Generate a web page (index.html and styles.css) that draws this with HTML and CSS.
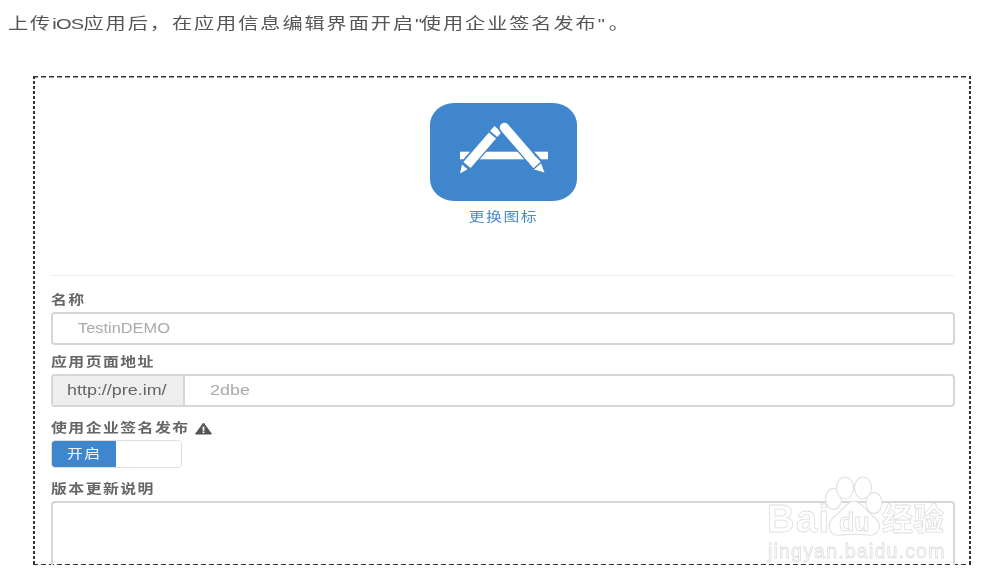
FILE: index.html
```html
<!DOCTYPE html>
<html lang="zh">
<head>
<meta charset="utf-8">
<title>使用企业签名发布</title>
<link rel="stylesheet" href="styles.css">
</head>
<body>
<div class="page">
  <p class="intro"><span class="intro-text">上传<span class="latin">iOS</span>应用后，在应用信息编辑界面开启<span class="quote">"</span>使用企业签名发布<span class="quote-end">"</span>。</span></p>
  <div class="frame">
    <div class="avatar">
      <svg class="app-icon" width="147" height="98" viewBox="0 0 147 98" aria-hidden="true">
        <rect width="147" height="98" rx="24" ry="22" fill="#3f86cd"/>
        <rect x="30" y="48.7" width="88" height="7.6" fill="#fff"/>
        <g fill="none">
          <path d="M31 68.5 L67 27" stroke="#3f86cd" stroke-width="12.5"/>
          <path d="M37 62 L62.5 32.5" stroke="#fff" stroke-width="9.5"/>
          <path d="M63.7 31 L68 26" stroke="#fff" stroke-width="9.5"/>
          <path d="M74 24 L112 67" stroke="#3f86cd" stroke-width="12.5" stroke-linecap="round"/>
          <path d="M74.5 24.5 L100.8 55" stroke="#fff" stroke-width="9.5" stroke-linecap="round"/>
          <path d="M102.2 56.6 L107 62" stroke="#fff" stroke-width="9.5"/>
        </g>
        <path d="M30 70.5 L32 61.5 L37.5 66.2 Z" fill="#fff"/>
        <path d="M114.5 69.5 L104 66.5 L111 60.2 Z" fill="#fff"/>
      </svg>
      <a class="change-link"><span class="stretch-center">更换图标</span></a>
    </div>
    <hr class="divider">
    <div class="field field-tight">
      <label class="field-label"><span class="stretch">名称</span></label>
      <div class="input"><span class="stretch stretch-wide">TestinDEMO</span></div>
    </div>
    <div class="field">
      <label class="field-label"><span class="stretch">应用页面地址</span></label>
      <div class="input-group">
        <span class="addon"><span class="stretch stretch-wider">http://pre.im/</span></span>
        <span class="group-value"><span class="stretch stretch-wider">2dbe</span></span>
      </div>
    </div>
    <div class="field">
      <label class="field-label"><span class="stretch">使用企业签名发布</span>
        <svg class="warn" width="17" height="13" viewBox="0 0 17 13" aria-hidden="true"><path d="M8.5 1 L16.5 12 H.5 Z" fill="#555" stroke="#555" stroke-linejoin="round"/><rect x="7.6" y="4.5" width="1.8" height="4.2" fill="#fff"/><rect x="7.6" y="9.5" width="1.8" height="1.6" fill="#fff"/></svg>
      </label>
      <div class="toggle"><span class="toggle-on"><span class="stretch-center">开启</span></span><span class="toggle-off"></span></div>
    </div>
    <div class="field">
      <label class="field-label"><span class="stretch">版本更新说明</span></label>
      <div class="textarea"></div>
    </div>
  </div>
  <div class="watermark">
    <svg class="paw" width="70" height="70" viewBox="0 0 70 70" aria-hidden="true">
      <g fill="#fff" stroke="#e0e0e0" stroke-width="1.1">
        <ellipse cx="13.5" cy="24" rx="8" ry="10.5"/>
        <ellipse cx="25" cy="13" rx="8.5" ry="11"/>
        <ellipse cx="43" cy="13" rx="8.5" ry="11"/>
        <ellipse cx="54" cy="28" rx="8" ry="10.5"/>
        <path d="M34 26 C42 27 46 36 54 42 C63 49 60 62 47 60 C39 59 29 59 21 60 C8 62 6 49 14 42 C22 36 26 27 34 26 Z"/>
      </g>
    </svg>
    <span class="wm-bai">Bai</span>
    <span class="wm-du">du</span>
    <span class="wm-jy">经验</span>
    <span class="wm-url">jingyan.baidu.com</span>
  </div>
</div>
</body>
</html>
```
FILE: styles.css
```css
html, body { margin: 0; padding: 0; background: #fff; }
body { width: 1000px; height: 585px; overflow: hidden; font-family: "Liberation Sans", "Noto Sans CJK SC", sans-serif; }
.page { position: relative; width: 1000px; height: 585px; overflow: hidden; filter: blur(0.5px); }
.intro { margin: 0; padding: 14px 0 0 8px; height: 76px; box-sizing: border-box; font-size: 15.5px; line-height: 20px; letter-spacing: 1.5px; color: #555; white-space: nowrap; }
.intro-text { display: inline-block; transform: scaleX(1.3); transform-origin: left center; }
.latin { letter-spacing: -.6px; }
.quote { letter-spacing: -1px; }
.quote-end { letter-spacing: 3px; }
.stretch { display: inline-block; transform: scaleX(1.22); transform-origin: left center; white-space: nowrap; }
.stretch-wide { transform: scaleX(1.17); }
.stretch-wider { transform: scaleX(1.28); }
.stretch-center { display: inline-block; transform: scaleX(1.22); transform-origin: center; white-space: nowrap; }
.frame {
  box-sizing: border-box; width: 938px; height: 489px; margin-left: 33px; padding: 27px 16px 0 18px; overflow: hidden;
  background-image:
    repeating-linear-gradient(90deg, #333 0 5px, transparent 5px 8px),
    repeating-linear-gradient(90deg, #333 0 5px, transparent 5px 8px),
    repeating-linear-gradient(180deg, #333 0 3px, transparent 3px 5px),
    repeating-linear-gradient(180deg, #333 0 3px, transparent 3px 5px);
  background-size: 100% 1.5px, 100% 1.5px, 2px 100%, 2px 100%;
  background-position: 0 0, 0 100%, 0 0, 100% 0;
  background-repeat: no-repeat;
}
.avatar { display: flex; flex-direction: column; align-items: center; height: 172px; }
.app-icon { display: block; flex: none; }
.change-link { margin-top: 7px; font-size: 13px; line-height: 18px; color: #4a8ccb; letter-spacing: 1.2px; }
.divider { margin: 0 0 15px; border: 0; border-top: 1px solid #eeeeee; height: 0; }
.field { margin-bottom: 12px; }
.field-tight { margin-bottom: 8px; }
.field-label { display: flex; align-items: center; gap: 30px; height: 18px; margin-bottom: 3px; font-size: 13px; line-height: 18px; font-weight: 700; color: #666; letter-spacing: 1.2px; }
.input { box-sizing: border-box; height: 33px; padding-left: 25px; border: 2px solid #d6d6d6; border-radius: 4px; font-size: 14px; line-height: 29px; color: #aaa; }
.input-group { display: flex; box-sizing: border-box; height: 33px; border: 2px solid #d6d6d6; border-radius: 4px; }
.addon { width: 132px; flex: none; box-sizing: border-box; padding-left: 14px; background: #eeeeee; border-right: 2px solid #d6d6d6; font-size: 14px; line-height: 29px; color: #666; }
.group-value { padding-left: 25px; font-size: 14px; line-height: 29px; color: #aaa; }
.warn { flex: none; }
.toggle { display: flex; box-sizing: border-box; width: 131px; height: 28px; border: 1px solid #ddd; border-radius: 4px; overflow: hidden; }
.toggle-on { width: 64px; background: #3f86cd; color: #f0f6fc; font-size: 13px; line-height: 26px; letter-spacing: 1.2px; text-align: center; }
.toggle-off { flex: 1; background: #fff; }
.textarea { box-sizing: border-box; height: 100px; border: 2px solid #d6d6d6; border-radius: 4px; }
.watermark { position: absolute; left: 760px; top: 470px; width: 200px; height: 100px; pointer-events: none; color: #fff; }
.paw { position: absolute; left: 60px; top: 5px; }
.wm-bai, .wm-du, .wm-jy, .wm-url { position: absolute; color: #fff; -webkit-text-stroke: .8px #dedede; white-space: nowrap; }
.wm-bai { left: 7px; top: 27px; font-size: 38px; line-height: 44px; font-weight: 700; letter-spacing: 1.5px; }
.wm-du { left: 79px; top: 37px; font-size: 25px; line-height: 30px; font-weight: 700; }
.wm-jy { left: 122px; top: 32px; font-size: 31px; line-height: 36px; font-weight: 700; }
.wm-url { left: 8px; top: 69px; font-size: 19.5px; line-height: 24px; letter-spacing: 1.2px; }
```
